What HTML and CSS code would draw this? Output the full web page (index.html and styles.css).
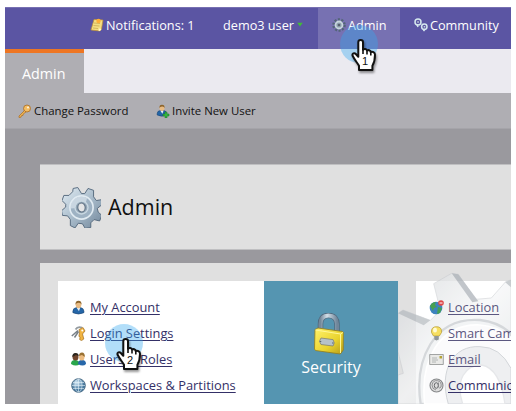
FILE: index.html
```html
<!DOCTYPE html>
<html lang="en">
<head>
<meta charset="utf-8">
<title>Admin</title>
<link rel="stylesheet" href="styles.css">
</head>
<body>
<svg class="defs" width="0" height="0" aria-hidden="true">
  <defs>
    <linearGradient id="steel" x1="0" y1="0" x2="1" y2="1"><stop offset="0" stop-color="#e3edf4"/><stop offset=".5" stop-color="#a9bccb"/><stop offset="1" stop-color="#71869a"/></linearGradient>
    <linearGradient id="gold" x1="0" y1="0" x2="1" y2="1"><stop offset="0" stop-color="#fff26a"/><stop offset=".6" stop-color="#e9d32e"/><stop offset="1" stop-color="#b79c17"/></linearGradient>
    <linearGradient id="shackle" x1="0" y1="0" x2="1" y2="0"><stop offset="0" stop-color="#75899b"/><stop offset=".4" stop-color="#d3dfe8"/><stop offset="1" stop-color="#70869a"/></linearGradient>
    <linearGradient id="pale" x1="0" y1="0" x2="1" y2="1"><stop offset="0" stop-color="#d3d6d9"/><stop offset=".5" stop-color="#f6f7f8"/><stop offset="1" stop-color="#dcdfe2"/></linearGradient>
    <radialGradient id="globe" cx=".4" cy=".3"><stop offset="0" stop-color="#cfe6f5"/><stop offset="1" stop-color="#47799f"/></radialGradient>
    <symbol id="person" viewBox="0 0 14 16">
      <path d="M1 12Q1 8.500 5 8h4q3.500 .5 3.800 4v1.500Q7 16.500 1 13.500z" fill="#2466a8" stroke="#173e6b" stroke-width=".6"/>
      <path d="M5 8.200h3.800L7.500 12z" fill="#e8f0f6"/>
      <ellipse cx="7" cy="5" rx="3" ry="3.700" fill="#e9bb83"/>
      <path d="M3.800 5Q3.500.8 7 .8T10.200 5Q9.500 2.800 7 3T3.800 5z" fill="#8b642d"/>
    </symbol>
    <symbol id="hand" viewBox="0 0 27 33">
      <path d="M7.300 3.300c0-2.900 4.700-2.900 4.700 0v7.500c1-1.300 3.600-1 4 .8 1.200-1 3.400-.3 3.700 1.400 1.700-.8 4.300.2 4.300 2.700 0 5-.2 7-2.600 11V31H8v-4.200C6.500 24 4 21.500 1.600 16.800c-.8-2.300 1.800-3.400 3.200-1.800l2.500 2.800z" fill="#fff" stroke="#111" stroke-width="2" stroke-linejoin="round"/>
      <path d="M12 10.500v4.500M16 11.500v4M19.800 13v3.500" stroke="#111" stroke-width="1.600" fill="none"/>
    </symbol>
    <symbol id="gear" viewBox="-21 -22 42 44">
      <path fill="url(#steel)" stroke="#52677b" stroke-width="1" stroke-linejoin="round" d="M-9-20.500l5-1 4 6.500 3.500 0 3.500-5.500 6 2 0 7 3 4 6-1 0 5.500-5 4 1 4 4 3.500-2.500 6-6-1.500-3.500 3.500 0 5-6 1-3-5-4.500-.5-3.500 5-5-2.500 0-6.500-3-4-5.500-.5-1-5 4.500-4 0-3-4-4 2-5.500 5.500 0 4-4z"/>
      <circle r="12.500" fill="#9eb2c3" stroke="#e1ebf2" stroke-width="1.800"/>
      <path d="M-12 1A12 12 0 0 1 6-10L3 0z" fill="#dbe6ee" opacity=".7"/>
      <circle r="7" fill="#93a6b6" stroke="#c9d8e2" stroke-width="1.500"/>
      <ellipse rx="4" ry="4.800" fill="#e4e5e6" stroke="#5e7184" stroke-width="1.200"/>
    </symbol>
  </defs>
</svg>
<div class="app">
  <nav class="nav">
    <a class="nav-item notes"><svg class="ico" viewBox="0 0 14 14"><path d="M4 1.500l9 .5-1.500 9-1.500 2-9-1z" fill="#f4de82" stroke="#c09032" stroke-width=".7"/><path d="M4 5l6 .5M3.500 7.500l6 .5M3 10l5 .5" stroke="#bd9b43" stroke-width=".6"/><circle cx="8.500" cy="3" r="2.200" fill="#ffaf38"/><path d="M11.500 11L9 10.500 8.500 13l1.500 0z" fill="#fff6c9"/></svg><span>Notifications: 1</span></a>
    <a class="nav-item user"><span>demo3 user</span><svg class="caret" viewBox="0 0 7 5"><path d="M.3.500h6.400L3.500 4.800z" fill="#42bd36"/></svg></a>
    <a class="nav-item active"><svg class="ico" viewBox="0 0 14 14"><circle cx="7" cy="7" r="5.500" fill="none" stroke="#536577" stroke-width="2.600" stroke-dasharray="2 1.450"/><circle cx="7" cy="7" r="3.500" fill="#8fa2af" stroke="#c7d5dc" stroke-width="1.800"/><circle cx="7" cy="7" r="1.300" fill="#57606e"/></svg><span>Admin</span></a>
    <a class="nav-item community"><svg class="ico" viewBox="0 0 14 14"><g fill="none" stroke="#d5e8ee" stroke-width="1.500"><circle cx="4" cy="4" r="3"/><path d="M3 6.500L4 9"/><circle cx="10.300" cy="8.700" r="2.700"/><path d="M11 11L9.500 13.200"/></g><path d="M3.300 3.300h1.500v1.500H3.300zM9.700 8h1.500v1.500H9.700z" fill="#c7d8dd"/></svg><span>Community</span></a>
  </nav>
  <div class="tabs"><div class="tab">Admin</div></div>
  <div class="toolbar">
    <a class="tool password"><svg class="ico" viewBox="0 0 14 14"><circle cx="9" cy="4.500" r="3.500" fill="#f5bd61" stroke="#a76b25" stroke-width=".8"/><circle cx="10" cy="3.500" r="1.100" fill="#f9f0df"/><path d="M6.500 6.500L1 12v1.500l2-.3.500-1.500 1.500-.3.300-1.500L8 8z" fill="#efb451" stroke="#a76b25" stroke-width=".7"/></svg><span>Change Password</span></a>
    <a class="tool invite"><svg class="ico" viewBox="0 0 14 14"><use href="#person" width="12" height="13"/><path d="M9 8h2v2h2v2h-2v2H9v-2H7v-2h2z" fill="#35b540" stroke="#167324" stroke-width=".5"/></svg><span>Invite New User</span></a>
  </div>
  <main class="content">
    <header class="heading"><svg class="big-gear" viewBox="-21 -22 42 44"><use href="#gear" x="-21" y="-22" width="42" height="44"/></svg><h1>Admin</h1></header>
    <section class="board">
      <ul class="links account">
        <li><svg class="ico" viewBox="0 0 14 16"><use href="#person" width="14" height="16"/></svg><a>My Account</a></li>
        <li><svg class="ico" viewBox="0 0 15 15"><path d="M7 4.500L.8 10M7.500 5.500l-4 6" stroke="#777f86" stroke-width="1.500"/><path d="M4.500 3.500Q6.500 0 11 1.500" fill="none" stroke="#949ba0" stroke-width="1.800"/><path d="M8 3.500l4-2 2 3.500-2.500 3 1.300 5-2.300 1.600-2-1.200.7-2-1.300-1 .6-3.600z" fill="#f1b441" stroke="#a16d20" stroke-width=".7"/><circle cx="11.300" cy="4.500" r="1" fill="#fff"/></svg><a>Login Settings</a></li>
        <li><svg class="ico" viewBox="0 0 15 15"><path d="M0 12q0-4 4-4t5 4q-4 3-9 0z" fill="#29a64b"/><ellipse cx="4.500" cy="5" rx="3" ry="3.500" fill="#70452c"/><path d="M1.300 5q0-4 3.200-4t3.200 3L5 3z" fill="#2b251d"/><path d="M7 12q0-4 4-4t4 4q-3 3-8 0z" fill="#2767a9"/><ellipse cx="10.800" cy="5" rx="2.700" ry="3.500" fill="#ecbb80"/><path d="M8 4q0-3.500 3-3.500T13.800 5L11 3z" fill="#9a7132"/></svg><a>Users &amp; Roles</a></li>
        <li><svg class="ico" viewBox="0 0 15 15"><circle cx="7.500" cy="7.500" r="6.800" fill="url(#globe)" stroke="#4d6f89"/><path d="M1 7.500h13M2 4.500h11M2 10.500h11M7.500 1v13" stroke="#e4f1f8" stroke-width=".6"/><ellipse cx="7.500" cy="7.500" rx="3.500" ry="6.500" fill="none" stroke="#e4f1f8" stroke-width=".6"/></svg><a>Workspaces &amp; Partitions</a></li>
      </ul>
      <div class="security"><svg class="lock" viewBox="0 0 30 42"><path d="M6.500 20V11q0-8.500 8-8.500t8.500 8.500v10" fill="none" stroke="#50697e" stroke-width="5.500"/><path d="M6.500 20V11q0-8.500 8-8.500t8.500 8.500v10" fill="none" stroke="url(#shackle)" stroke-width="4"/><path d="M1 16.500l3-1.500 24.500 3.500.8 1v17.500l-3 4L1.500 37.500.5 36z" fill="url(#gold)" stroke="#937c1b" stroke-width=".8"/><path d="M1.500 17l25 4 2.500-1.500M26.500 21v19" fill="none" stroke="#fff796"/><path d="M7 25l12 1.600q2.500 3.500 0 6.400L7 31.500q-3-3.200 0-6.500z" fill="#b6c2c8" stroke="#83836c" stroke-width=".8"/><path d="M6.500 28v1M18.800 29.500v1" stroke="#596771" stroke-width="1.500"/></svg><span>Security</span></div>
      <ul class="links setup">
        <li><svg class="ico" viewBox="0 0 15 15"><circle cx="7" cy="8" r="6.300" fill="#3d83be"/><path d="M1 6q2-4 6-4l-1 3 2 2-3 1-1 3zM9 7l4 1-2 5-3 1z" fill="#47a052"/><circle cx="12" cy="3" r="2.800" fill="#df4647"/><path d="M10.500 3h3" stroke="#fff"/></svg><a>Location</a></li>
        <li><svg class="ico" viewBox="0 0 15 15"><path d="M4.500 10L2.500 6.500Q2 .7 7.500.7t5 5.800L10.300 10z" fill="#f7df61" stroke="#bba13c" stroke-width=".8"/><ellipse cx="6" cy="4" rx="2" ry="2.500" fill="#fffbd4"/><path d="M5.300 10h4.500v3.500l-2.300 1-2.200-1z" fill="#91979a"/></svg><a>Smart Campaign</a></li>
        <li><svg class="ico" viewBox="0 0 15 15"><path d="M.700 2.500h13.600v10H.700z" fill="#e9e9e7" stroke="#8d8f8f" stroke-width=".8"/><path d="M3 6h5M3 8h6M3 10h4" stroke="#a3a8aa" stroke-width=".8"/><path d="M10.500 4H13v2.500h-2.500z" fill="#b4a437"/></svg><a>Email</a></li>
        <li><svg class="ico" viewBox="0 0 15 15"><circle cx="7.500" cy="7.500" r="6.500" fill="#ddd" stroke="#858789" stroke-width="1.100"/><ellipse cx="7.300" cy="7.500" rx="2" ry="2.800" fill="none" stroke="#67696b"/><path d="M9.500 4.500V9q1 2 2.500 0 1-5.500-3.500-6.300T3 7q0 4 4 5" fill="none" stroke="#7d7f81" stroke-width=".8"/></svg><a>Communication</a></li>
      </ul>
      <svg class="watermark" viewBox="24 0 339 432" aria-hidden="true">
        <g opacity=".72">
          <path d="M24 160l15-10 82 31 30-30-20-80 54-31 20 3 52 75 47-4 44-50 15-4v372H24V345l16-5-16-65z" fill="url(#pale)" stroke="#c4c7cb" stroke-width="2"/>
          <path d="M185 40l20 3 60 81-18 3z" fill="#aab0b7"/>
          <path d="M24 160l15-10 82 31-20 15z" fill="#b5babf"/>
          <path d="M345 66l18-6v22z" fill="#b5babf"/>
          <path d="M92 432C72 300 130 170 270 180q55 6 93 40v212z" fill="#eef0f2" stroke="#c6cace" stroke-width="7"/>
          <path d="M104 432C90 305 145 190 270 195q55 4 93 38v199z" fill="#fafafb" stroke="#fff" stroke-width="5"/>
          <path d="M175 432C145 330 190 255 270 260q60 0 93 65v107z" fill="#e8eaed" stroke="#c3c7cc" stroke-width="3"/>
          <path d="M218 432C195 360 225 315 275 315q55 10 70 117z" fill="#fff" stroke="#dddfe2" stroke-width="4"/>
        </g>
      </svg>
    </section>
  </main>
</div>
<div class="pointer first"><i></i><svg viewBox="0 0 27 33"><use href="#hand" width="27" height="33"/></svg><b>1</b></div>
<div class="pointer second"><i></i><svg viewBox="0 0 27 33"><use href="#hand" width="27" height="33"/></svg><b>2</b></div>
</body>
</html>
```
FILE: styles.css
```css
* { box-sizing: border-box; }
body { margin: 0; padding: 7px 5px; width: 516px; height: 411px; overflow: hidden; background: #fff; color: #111; font-family: "Open Sans", "Noto Sans", sans-serif; }
.defs { position: absolute; }
svg { display: block; flex: none; }
a, span { white-space: nowrap; }
.app { width: 506px; height: 397px; overflow: hidden; background: #9a999e; display: flex; flex-direction: column; }
.nav { height: 42px; flex: none; display: flex; background: #5b55a3; border-top: 1px solid #7770b2; color: #fff; font-size: 12.700px; line-height: 34px; }
.nav-item { display: flex; align-items: flex-start; gap: 2px; height: 41px; }
.nav-item .ico { width: 14px; height: 14px; margin-top: 10px; }
.notes { width: 218px; padding-left: 85px; }
.user { width: 95px; gap: 3px; }
.caret { width: 6px; height: 5px; margin-top: 14px; }
.active { width: 82px; padding-left: 14px; background: #7771b2; }
.community { padding-left: 14px; }
.tabs { height: 44px; flex: none; background: #ebeaf0; }
.tab { width: 79px; height: 44px; padding-left: 17px; border-top: 4px solid #ee7623; background: #afaeb3; color: #fff; font-size: 14.300px; line-height: 42px; }
.toolbar { height: 36px; flex: none; display: flex; background: #afaeb3; border-bottom: 1px solid #a5a4a9; font-size: 11.400px; line-height: 36px; }
.tool { display: flex; gap: 2px; }
.tool .ico { width: 14px; height: 14px; margin-top: 11px; }
.password { width: 138px; padding-left: 13px; }
.invite { padding-left: 13px; }
.content { padding: 35px 0 0 35px; }
.heading { height: 86px; display: flex; padding: 21px 0 0 22px; gap: 7px; background: #e0e0e0; border: 1px solid #bfbfc1; border-width: 1px 0; }
.big-gear { width: 39px; height: 43px; }
h1 { margin: 0; font-size: 21.500px; font-weight: 400; line-height: 42px; }
.board { position: relative; height: 141px; margin-top: 13px; padding: 18px 0 0 18px; display: flex; background: #e0e0e0; }
.links { margin: 0; padding: 13px 0 0 13px; list-style: none; background: #fff; font-size: 12.850px; color: #343067; }
.links li { display: flex; height: 26px; gap: 4px; line-height: 26px; }
.links .ico { width: 15px; height: 15px; margin-top: 6px; }
.links a { text-decoration: underline; text-underline-offset: 2px; text-decoration-thickness: 1px; }
.account { width: 206px; }
.security { width: 134px; display: flex; flex-direction: column; align-items: center; padding-top: 32px; background: #5595b1; color: #fff; font-size: 16px; line-height: 25px; }
.lock { width: 30px; height: 42px; margin-right: 4px; }
.setup { position: relative; z-index: 2; width: 95px; margin-left: 18px; overflow: hidden; background: none; color: #5b5780; }
.setup li:last-child { color: #343067; }
.board::after { content: ""; position: absolute; left: 376px; top: 18px; width: 95px; height: 123px; background: #fff; }
.watermark { position: absolute; z-index: 1; left: 358px; top: -3px; width: 113px; height: 144px; }
.pointer { position: absolute; width: 39px; height: 49px; z-index: 4; }
.pointer i { position: absolute; left: 0; top: 0; width: 38px; height: 38px; border-radius: 50%; background: #35a9ee; opacity: .38; }
.pointer svg { position: absolute; left: 11px; top: 14px; width: 27px; height: 33px; filter: drop-shadow(1px 2px 1px #0006); }
.pointer b { position: absolute; left: 22px; top: 29px; font: 400 11px/14px "Liberation Sans", sans-serif; color: #111; }
.first { left: 340px; top: 25px; }
.second { left: 105px; top: 324px; }
```
